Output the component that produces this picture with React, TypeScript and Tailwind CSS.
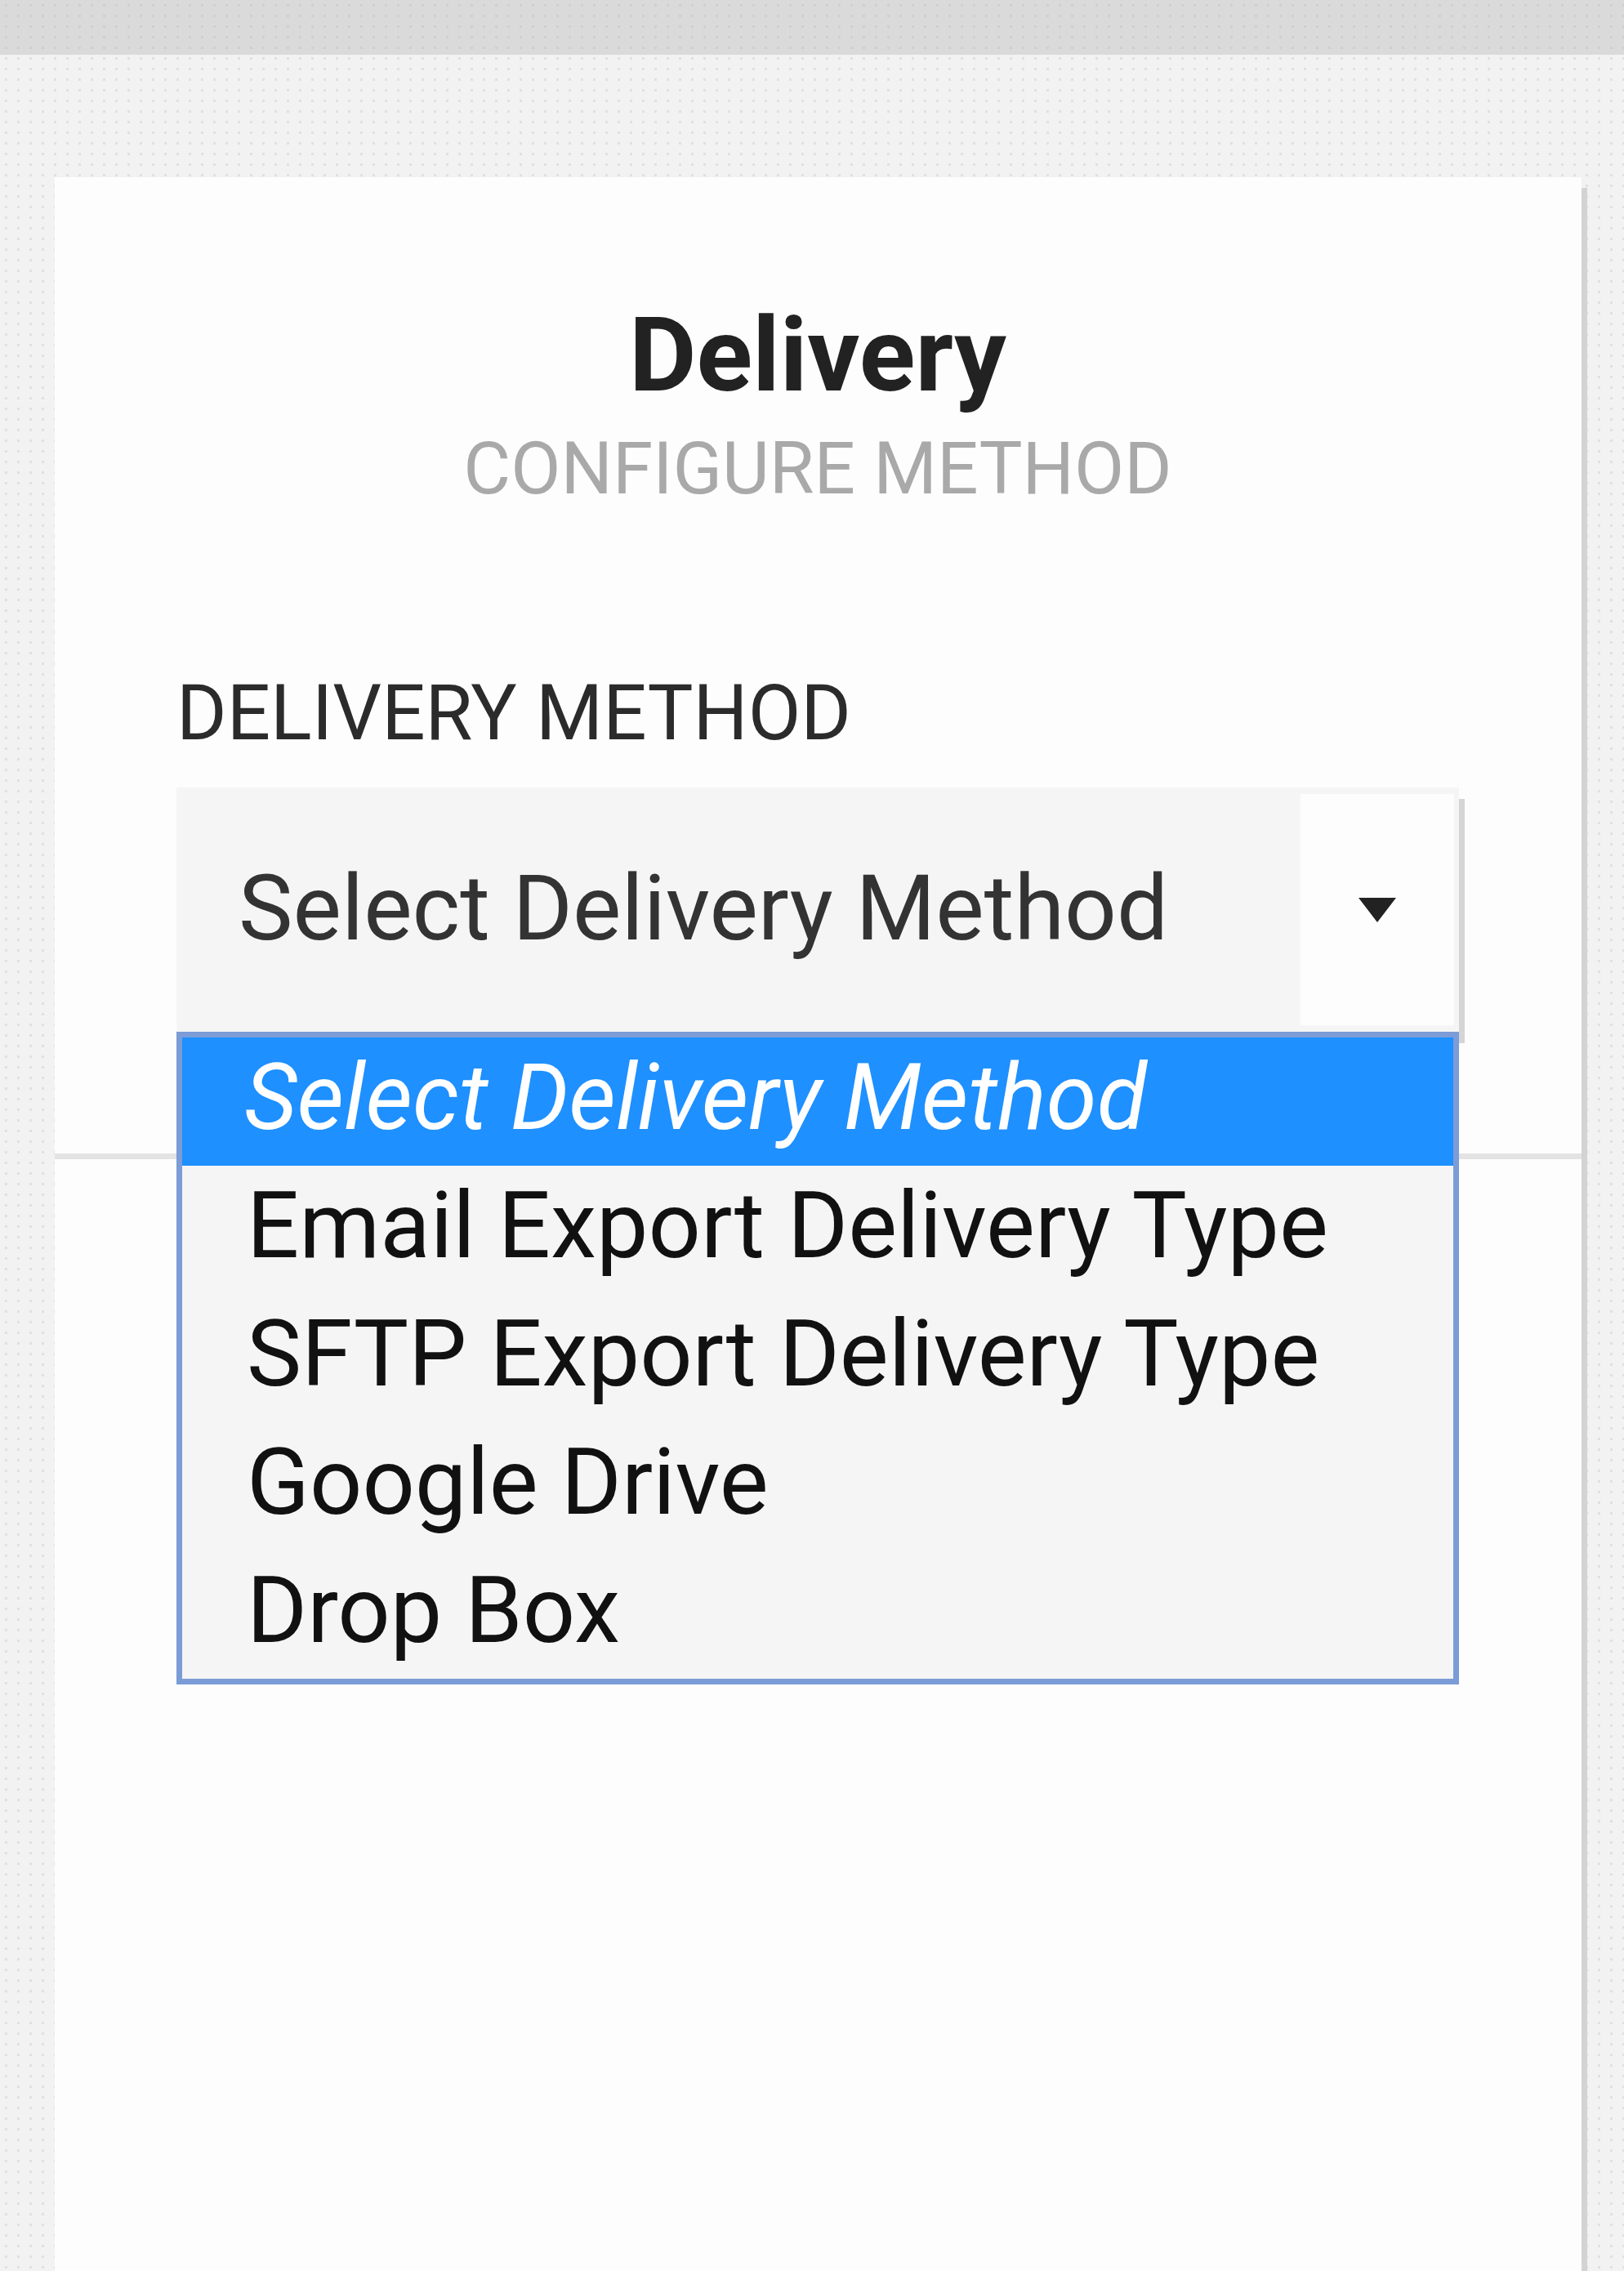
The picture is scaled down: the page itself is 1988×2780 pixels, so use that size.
const options = [
  "Select Delivery Method",
  "Email Export Delivery Type",
  "SFTP Export Delivery Type",
  "Google Drive",
  "Drop Box",
];

function CaretDown() {
  return (
    <svg width="46" height="30" viewBox="0 0 46 30" className="block">
      <path d="M0 0 L46 0 L23 30 Z" fill="#222222" />
    </svg>
  );
}

export default function App() {
  return (
    <div className="w-[1988px] h-[2780px] overflow-hidden flex flex-col bg-[#f2f2f2] bg-[radial-gradient(circle,#e0e0e0_1.5px,transparent_1.7px)] bg-[length:15px_13px] font-['Roboto',sans-serif]">
      {/* top bar */}
      <div className="h-[67px] shrink-0 bg-[#dadada] bg-[radial-gradient(circle,#cfcfcf_1.5px,transparent_1.7px)] bg-[length:15px_13px]" />

      <div className="flex-1 flex pl-[67px] pr-[52px] pt-[150px]">
        <div className="flex-1 bg-[#fdfdfd] shadow-[7px_13px_0_#d3d3d3] flex flex-col">
          {/* header + form */}
          <div className="pt-[143px] pb-[149px] pl-[149px] pr-[150px] border-b-[7px] border-[#e3e3e3]">
            <div className="text-center">
              <div className="text-[127px] leading-[150px] font-bold text-[#222222]">Delivery</div>
              <div className="mt-[9px] text-[89px] leading-[110px] text-[#a9a9a9] uppercase">
                Configure Method
              </div>
            </div>

            <div className="mt-[189px] text-[94px] leading-[110px] text-[#2b2b2b] uppercase">
              Delivery Method
            </div>

            <div className="relative mt-[36px]">
              <div className="h-[299px] bg-[#f5f5f5] shadow-[7px_14px_0_#d5d5d5] flex items-stretch">
                <div className="flex-1 flex items-center pl-[76px] pb-[4px] text-[112px] leading-[134px] text-[#333333]">
                  Select Delivery Method
                </div>
                <div className="w-[188px] my-[8px] mr-[6px] bg-[#fdfdfd] flex items-center justify-center">
                  <CaretDown />
                </div>
              </div>

              {/* open option list */}
              <div className="absolute left-0 right-0 top-full z-10 border-[7px] border-[#7b9cd6] bg-[#f5f5f5]">
                {options.map((o, i) => (
                  <div
                    key={o}
                    className={
                      i === 0
                        ? "h-[157px] flex items-center pl-[76px] pb-[10px] text-[112px] leading-[134px] italic text-white bg-[#1e90ff]"
                        : "h-[157px] flex items-center pl-[79px] pb-[10px] text-[113px] leading-[134px] text-[#111111]"
                    }
                  >
                    {o}
                  </div>
                ))}
              </div>
            </div>
          </div>
          <div className="flex-1" />
        </div>
      </div>
    </div>
  );
}
